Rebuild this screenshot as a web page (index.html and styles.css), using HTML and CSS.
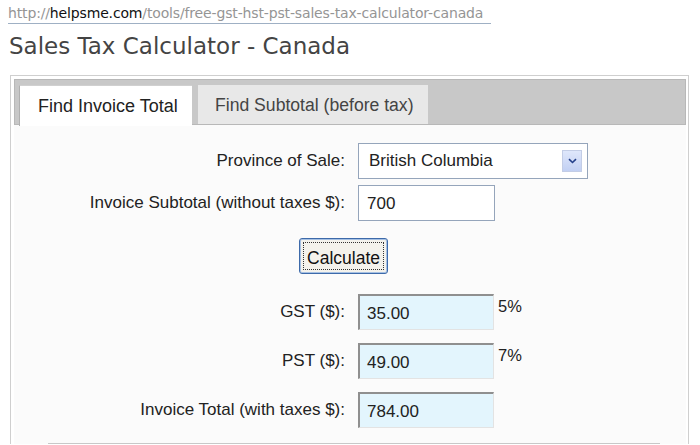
FILE: index.html
```html
<!DOCTYPE html>
<html>
<head>
<meta charset="utf-8">
<link rel="stylesheet" href="styles.css">
</head>
<body>
<div class="url"><span class="dim">http://</span><span class="host">helpsme.com</span><span class="dim">/tools/free-gst-hst-pst-sales-tax-calculator-canada</span></div>
<h1 class="title">Sales Tax Calculator - Canada</h1>
<div class="box">
  <div class="tabbar">
    <div class="tab active">Find Invoice Total</div>
    <div class="tab">Find Subtotal (before tax)</div>
  </div>
  <div class="panel">
    <div class="form top">
      <label class="lbl">Province of Sale:</label>
      <div class="select">
        <span>British Columbia</span>
        <span class="drop"><svg width="9" height="6" viewBox="0 0 9 6"><path d="M1 1.2 L4.5 4.5 L8 1.2" fill="none" stroke="#24408a" stroke-width="1.6"/></svg></span>
      </div>
      <span></span>
      <label class="lbl">Invoice Subtotal (without taxes $):</label>
      <div class="input">700</div>
      <span></span>
    </div>
    <div class="btnrow"><button class="calc"><span>Calculate</span></button></div>
    <div class="form results">
      <label class="lbl">GST ($):</label>
      <div class="input ro">35.00</div>
      <span class="pct">5%</span>
      <label class="lbl">PST ($):</label>
      <div class="input ro">49.00</div>
      <span class="pct">7%</span>
      <label class="lbl">Invoice Total (with taxes $):</label>
      <div class="input ro">784.00</div>
      <span></span>
    </div>
    <div class="rule"></div>
  </div>
</div>
</body>
</html>
```
FILE: styles.css
```css
html, body {
  margin: 0;
  padding: 0;
  background: #fff;
  overflow: hidden;
}
body {
  width: 700px;
  height: 445px;
}
.url {
  margin: 5px 0 0 8px;
  width: 483px;
  font-family: "DejaVu Sans", sans-serif;
  font-size: 14px;
  line-height: 17px;
  color: #959595;
  border-bottom: 1px solid #9fb0c4;
  padding-bottom: 1px;
  white-space: nowrap;
  letter-spacing: -0.15px;
}
.url .host {
  color: #111;
}
.title {
  margin: 8px 0 0 9px;
  font-family: "DejaVu Sans", sans-serif;
  font-weight: normal;
  font-size: 23px;
  line-height: 28px;
  color: #444;
}
.box {
  margin: 15px 0 0 10px;
  width: 679px;
  height: 369px;
  overflow: hidden;
  border: 1px solid #cfcfcf;
  border-bottom: 0;
  padding: 3px 2px 0 3px;
  box-sizing: border-box;
  background: #fff;
}
.tabbar {
  display: flex;
  gap: 6px;
  height: 46px;
  box-sizing: border-box;
  background: #c8c8c8;
  border: 1px solid #b8b8b8;
  padding: 5px 0 0 4px;
}
.tab {
  font-family: "Liberation Sans", Arial, sans-serif;
  font-size: 17.6px;
  color: #444;
  background: #e8e8e8;
  width: 230px;
  height: 39px;
  box-sizing: border-box;
  padding: 10px 0 0 17px;
  white-space: nowrap;
}
.tab.active {
  width: 173px;
  background: #fff;
  color: #222;
  font-size: 18px;
  height: 41px;
  padding-left: 18px;
  border-left: 1px solid #b0b0b0;
  border-top: 1px solid #d0d0d0;
}
.panel {
  background: #fbfbfb;
  height: 330px;
  padding-top: 18px;
  font-family: "Liberation Sans", Arial, sans-serif;
  font-size: 17px;
  color: #222;
}
.form {
  display: grid;
  grid-template-columns: 331px 230px 1fr;
  column-gap: 13px;
  align-items: center;
}
.form.top {
  row-gap: 6px;
}
.form.results {
  row-gap: 13px;
  margin-top: 20px;
}
.lbl {
  text-align: right;
  white-space: nowrap;
}
.select {
  height: 36px;
  box-sizing: border-box;
  border: 1px solid #95a5bb;
  background: #fff;
  display: flex;
  align-items: center;
  justify-content: space-between;
  padding: 0 5px 0 10px;
}
.drop {
  width: 20px;
  height: 22px;
  background: linear-gradient(#dfe7fb, #c2d0f3);
  border: 1px solid #c3cde6;
  box-sizing: border-box;
  display: flex;
  align-items: center;
  justify-content: center;
}
.input {
  width: 137px;
  height: 36px;
  box-sizing: border-box;
  border: 1px solid #95a5bb;
  background: #fff;
  padding: 8px 0 0 8px;
}
.input.ro {
  width: 136px;
  background: #e3f5fd;
  border-top: 2px solid #8f8f8f;
  border-left: 2px solid #8f8f8f;
  border-right: 1px solid #e3e3e3;
  border-bottom: 1px solid #e3e3e3;
  padding: 8px 0 0 7px;
}
.pct {
  align-self: start;
  margin-left: -103px;
  font-size: 16.5px;
  line-height: 18px;
  margin-top: 3px;
}
.btnrow {
  display: flex;
  padding-left: 285px;
  margin-top: 17px;
}
.calc {
  width: 89px;
  height: 36px;
  padding: 3px;
  border: 1px solid #3d6aaa;
  border-radius: 3px;
  background: #f4f2ec;
  box-shadow: inset 0 0 0 1px #a7c1e3;
  font-family: "Liberation Sans", Arial, sans-serif;
  font-size: 17.5px;
  color: #111;
}
.calc span {
  display: block;
  height: 100%;
  box-sizing: border-box;
  border: 1px dotted #333;
  padding-top: 5px;
}
.rule {
  margin: 15px 26px 0 34px;
  border-top: 1px solid #c8c8c8;
}
```
